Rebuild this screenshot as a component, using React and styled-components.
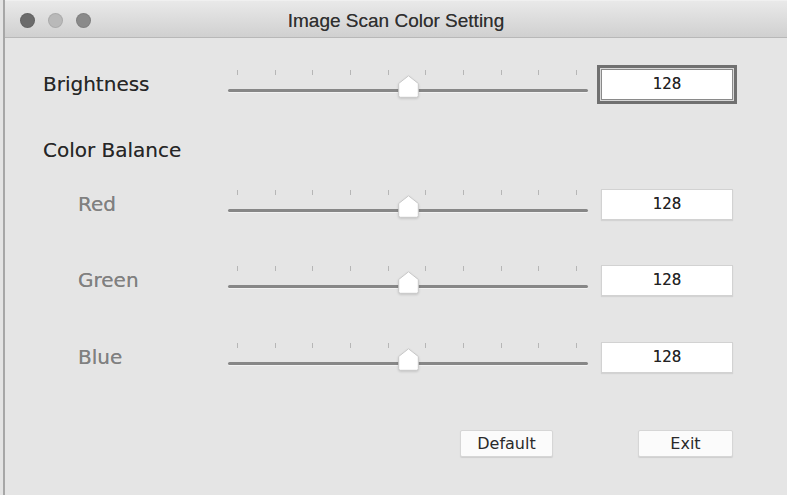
import React from "react";
import styled, { createGlobalStyle } from "styled-components";

const Global = createGlobalStyle`
  html, body {
    margin: 0;
    padding: 0;
    background: #e4e4e4;
    width: 787px;
    height: 495px;
    overflow: hidden;
  }
  #root { height: 495px; }
`;

const Window = styled.div`
  height: 495px;
  margin-left: 3px;
  border-left: 2px solid #a7a7a7;
  background: #e5e5e5;
  display: flex;
  flex-direction: column;
  box-sizing: border-box;
`;

const TitleBar = styled.div`
  flex: none;
  height: 38px;
  border-bottom: 1px solid #b8b8b8;
  border-top: 1px solid #f0f0f0;
  background: linear-gradient(#e9e9e9, #d0d0d0);
  display: grid;
  grid-template-columns: 1fr auto 1fr;
  align-items: center;
  box-sizing: border-box;
`;

const Lights = styled.div`
  display: flex;
  gap: 13px;
  padding-left: 15px;
  padding-top: 3px;
`;

const Light = styled.span`
  width: 15px;
  height: 15px;
  border-radius: 50%;
  background: ${(p) => p.$c};
  box-shadow: inset 0 0 0 1px rgba(0, 0, 0, 0.08);
`;

const Title = styled.div`
  font-family: "Liberation Sans", Arial, sans-serif;
  font-size: 19px;
  color: #2f2f2f;
  padding-top: 3px;
  text-shadow: 0 0 0.6px rgba(0, 0, 0, 0.5);
`;

const Body = styled.div`
  padding: 26px 0 0 38px;
  display: flex;
  flex-direction: column;
`;

const Row = styled.div`
  display: flex;
  align-items: center;
  height: 40px;
  margin-top: ${(p) => p.$mt || 0}px;
`;

const Label = styled.div`
  width: ${(p) => (p.$sub ? 150 : 185)}px;
  padding-left: ${(p) => (p.$sub ? 35 : 0)}px;
  font-family: "DejaVu Sans", Verdana, sans-serif;
  font-size: 20px;
  color: ${(p) => (p.$sub ? "#808080" : "#262626")};
  text-shadow: 0 0 0.6px rgba(0, 0, 0, 0.4);
`;

const Heading = styled.div`
  margin-top: 34px;
  line-height: 24px;
  font-family: "DejaVu Sans", Verdana, sans-serif;
  font-size: 20px;
  color: #262626;
  text-shadow: 0 0 0.6px rgba(0, 0, 0, 0.4);
`;

const SliderBox = styled.div`
  position: relative;
  width: 360px;
  height: 28px;
`;

const Ticks = styled.div`
  display: flex;
  justify-content: space-between;
  padding: 0 11px 0 9px;
  height: 5px;
`;

const Tick = styled.span`
  width: 1px;
  height: 5px;
  background: #b6b6b6;
`;

const Track = styled.div`
  margin-top: 14px;
  height: 3px;
  border-radius: 2px;
  background: #878787;
  box-shadow: 0 1px 0 #f2f2f2;
`;

const Thumb = styled.svg`
  position: absolute;
  top: 5px;
  width: 21px;
  height: 23px;
  filter: drop-shadow(0 1px 1px rgba(0, 0, 0, 0.15));
`;

const ValueBox = styled.div`
  margin-left: 13px;
  width: 132px;
  height: 31px;
  box-sizing: border-box;
  background: #ffffff;
  border: 1px solid ${(p) => (p.$focus ? "#8a8a8a" : "#d2d2d2")};
  box-shadow: ${(p) =>
    p.$focus
      ? "0 0 0 1px #d8d8d8, 0 0 0 4px #707070"
      : "0 1px 1px rgba(0,0,0,0.08)"};
  display: flex;
  align-items: center;
  justify-content: center;
  font-family: "DejaVu Sans", Verdana, sans-serif;
  font-size: 15px;
  color: #222222;
  text-shadow: 0 0 0.6px rgba(0, 0, 0, 0.5);
`;

const Footer = styled.div`
  margin-top: 53px;
  display: flex;
  justify-content: flex-end;
  gap: 85px;
  padding-right: 54px;
`;

const Button = styled.button`
  width: ${(p) => p.$w}px;
  height: 27px;
  padding: 0;
  background: #fbfbfb;
  border: 1px solid #d6d6d6;
  border-radius: 2px;
  box-shadow: 0 1px 1px rgba(0, 0, 0, 0.1);
  font-family: "DejaVu Sans", Verdana, sans-serif;
  font-size: 16px;
  color: #2a2a2a;
`;

function Slider({ value }) {
  const left = (value / 255) * (360 - 21);
  return (
    <SliderBox>
      <Ticks>
        {Array.from({ length: 10 }).map((_, i) => (
          <Tick key={i} />
        ))}
      </Ticks>
      <Track />
      <Thumb viewBox="0 0 21 23" style={{ left }}>
        <path
          d="M10.5 0.8 L20.3 8.5 L20.3 20.5 Q20.3 22.3 18.5 22.3 L2.5 22.3 Q0.7 22.3 0.7 20.5 L0.7 8.5 Z"
          fill="#ffffff"
          stroke="#c8c8c8"
          strokeWidth="1"
        />
      </Thumb>
    </SliderBox>
  );
}

function SettingRow({ label, value, sub, focus, mt }) {
  return (
    <Row $mt={mt}>
      <Label $sub={sub}>{label}</Label>
      <Slider value={value} />
      <ValueBox $focus={focus}>{value}</ValueBox>
    </Row>
  );
}

export default function App() {
  return (
    <>
      <Global />
      <Window>
        <TitleBar>
          <Lights>
            <Light $c="#6b6b6b" />
            <Light $c="#b9b9b9" />
            <Light $c="#8a8a8a" />
          </Lights>
          <Title>Image Scan Color Setting</Title>
          <div />
        </TitleBar>
        <Body>
          <SettingRow label="Brightness" value={128} focus />
          <Heading>Color Balance</Heading>
          <SettingRow label="Red" value={128} sub mt={22} />
          <SettingRow label="Green" value={128} sub mt={36} />
          <SettingRow label="Blue" value={128} sub mt={37} />
          <Footer>
            <Button $w={93}>Default</Button>
            <Button $w={95}>Exit</Button>
          </Footer>
        </Body>
      </Window>
    </>
  );
}
